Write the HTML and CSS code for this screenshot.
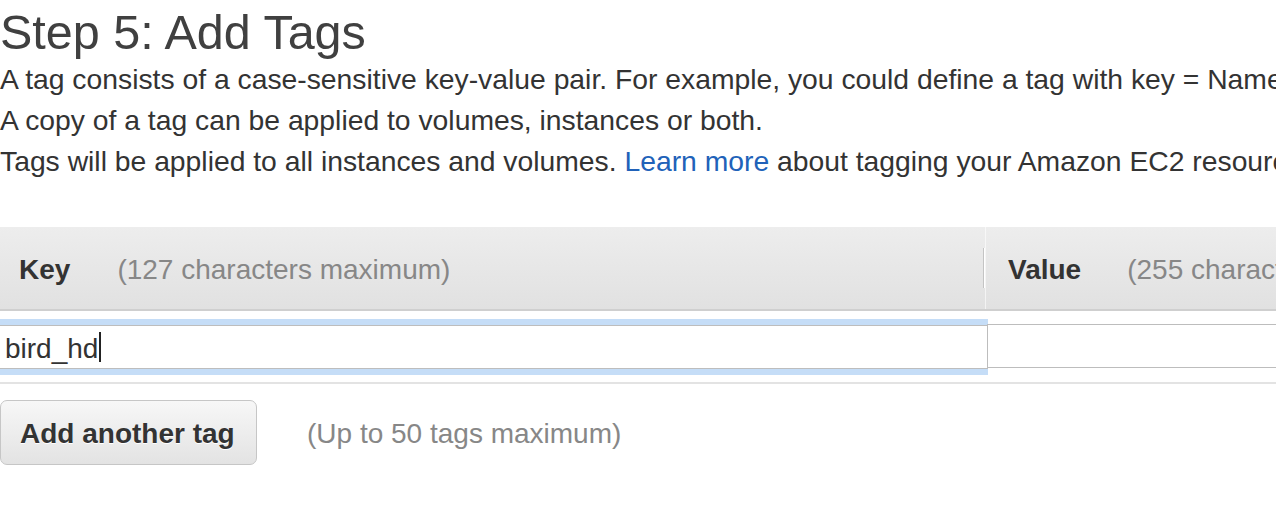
FILE: index.html
```html
<!DOCTYPE html>
<html lang="en">
<head>
<meta charset="utf-8">
<title>Step 5: Add Tags</title>
<link rel="stylesheet" href="styles.css">
</head>
<body>
<div class="page">
  <h1 class="title">Step 5: Add Tags</h1>
  <div class="intro">
    <p>A tag consists of a case-sensitive key-value pair. For example, you could define a tag with key = Name and value = Webserver.</p>
    <p>A copy of a tag can be applied to volumes, instances or both.</p>
    <p>Tags will be applied to all instances and volumes. <a class="link" href="#">Learn more</a> about tagging your Amazon EC2 resources.</p>
  </div>

  <div class="tags-table">
    <div class="thead">
      <div class="th th-key">
        <span class="th-label">Key</span>
        <span class="th-hint">(127 characters maximum)</span>
        <span class="th-spacer"></span>
        <span class="th-sep"></span>
      </div>
      <div class="th th-value">
        <span class="th-label">Value</span>
        <span class="th-hint">(255 characters maximum)</span>
      </div>
    </div>
    <div class="trow">
      <div class="cell-key">
        <div class="field field-focus">bird_hd<span class="caret"></span></div>
      </div>
      <div class="cell-value">
        <div class="field field-value"></div>
      </div>
    </div>
  </div>

  <div class="actions">
    <button class="btn" type="button">Add another tag</button>
    <span class="actions-hint">(Up to 50 tags maximum)</span>
  </div>
</div>
</body>
</html>
```

FILE: styles.css
```css
html, body {
  margin: 0;
  padding: 0;
  background: #ffffff;
  overflow: hidden;
}

body {
  font-family: "Liberation Sans", Arial, Helvetica, sans-serif;
  color: #333333;
}

.page {
  width: 1700px;
}

.title {
  margin: 9px 0 0 0;
  font-size: 48.5px;
  line-height: 47px;
  font-weight: normal;
  color: #404040;
  white-space: nowrap;
}

.intro {
  margin-top: 3px;
  font-size: 28.3px;
  line-height: 41px;
  color: #333333;
}

.intro p {
  margin: 0;
  white-space: nowrap;
}

.link {
  color: #2162b9;
  text-decoration: none;
}

.tags-table {
  margin-top: 45px;
}

.thead {
  display: flex;
  height: 82px;
  background: linear-gradient(#ededed, #e1e1e1);
  border-bottom: 2px solid #cfcfcf;
}

.th {
  display: flex;
  align-items: center;
  box-sizing: border-box;
  padding-top: 3px;
  font-size: 28px;
  white-space: nowrap;
}

.th-key {
  width: 986px;
  padding-left: 19px;
  border-right: 1px solid rgba(255, 255, 255, 0.6);
}

.th-value {
  padding-left: 22px;
}

.th-label {
  font-weight: bold;
  color: #333333;
}

.th-hint {
  margin-left: 47px;
  color: #878787;
}

.th-value .th-hint {
  margin-left: 46px;
}

.th-spacer {
  flex: 1;
}

.th-sep {
  width: 1px;
  height: 40px;
  margin-top: -3px;
  background: #c4c4c4;
  border-right: 1px solid #ffffff;
}

.trow {
  display: flex;
  padding: 8px 0 7px 0;
  border-bottom: 2px solid #e3e3e3;
}

.cell-key {
  width: 988px;
  padding: 6px 0;
}

.field {
  box-sizing: border-box;
  height: 44px;
  display: flex;
  align-items: center;
  padding-top: 3px;
  font-size: 28px;
  color: #333333;
  background: #ffffff;
  border: 1px solid #bdbdbd;
}

.field-focus {
  border-left: none;
  padding-left: 5px;
  box-shadow: 0 -6px 0 #c5ddf7, 0 6px 0 #c5ddf7;
}

.caret {
  display: inline-block;
  width: 2px;
  height: 30px;
  margin-left: 1px;
  margin-top: -3px;
  background: #222222;
}

.cell-value {
  flex: 1;
  margin-left: -1px;
  padding-top: 5px;
}

.field-value {
  width: 400px;
}

.actions {
  display: flex;
  align-items: center;
  margin-top: 16px;
}

.btn {
  box-sizing: border-box;
  height: 65px;
  width: 257px;
  padding: 3px 0 0 19px;
  text-align: left;
  font-family: "Liberation Sans", Arial, Helvetica, sans-serif;
  font-size: 28px;
  font-weight: bold;
  color: #333333;
  text-shadow: 0 1px 0 #ffffff;
  background: linear-gradient(#f7f7f7, #e3e3e3);
  border: 1px solid #c6c6c6;
  border-radius: 7px;
}

.actions-hint {
  margin-left: 50px;
  padding-top: 3px;
  font-size: 28px;
  color: #878787;
  white-space: nowrap;
}
```
